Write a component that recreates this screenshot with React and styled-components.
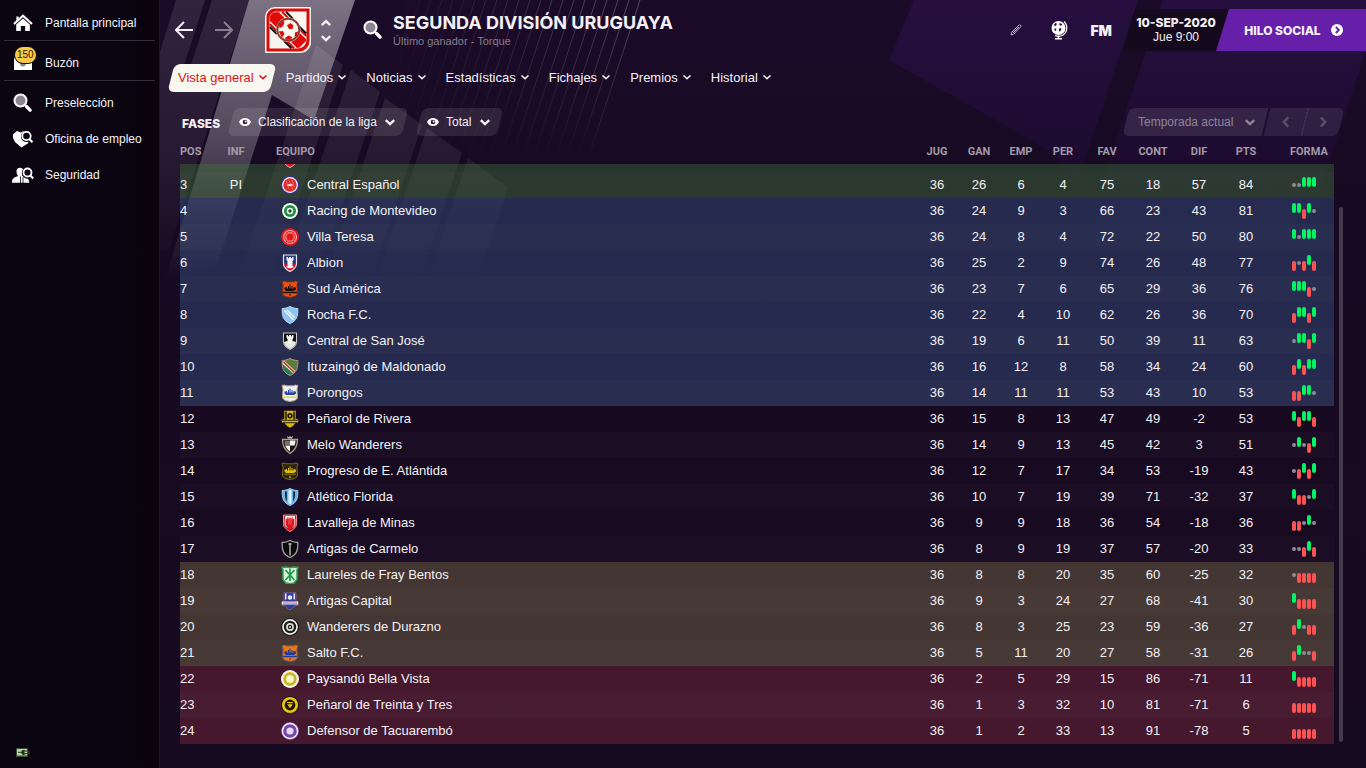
import React, { useState } from 'react';
import styled, { createGlobalStyle, css } from 'styled-components';

const GlobalStyle = createGlobalStyle`
  * {
    box-sizing: border-box;
  }
  body {
    margin: 0;
    background: #160a20;
    color: #f4f1f6;
    font-family: 'Liberation Sans', Arial, sans-serif;
    font-size: 13px;
  }
  button, select {
    font: inherit;
    color: inherit;
    border: 0;
    padding: 0;
    background: none;
    cursor: pointer;
  }
  a {
    color: inherit;
    text-decoration: none;
  }
  svg {
    display: block;
    flex-shrink: 0;
  }
`;

const navItems = ['Vista general', 'Partidos', 'Noticias', 'Estadísticas', 'Fichajes', 'Premios', 'Historial'];

// pos, team, played, won, drawn, lost, for, against, difference, points, form
const teams = [
  [3, 'Central Español', 36, 26, 6, 4, 75, 18, 57, 84, 'ddwww'],
  [4, 'Racing de Montevideo', 36, 24, 9, 3, 66, 23, 43, 81, 'wwlwd'],
  [5, 'Villa Teresa', 36, 24, 8, 4, 72, 22, 50, 80, 'wdwww'],
  [6, 'Albion', 36, 25, 2, 9, 74, 26, 48, 77, 'ldlwl'],
  [7, 'Sud América', 36, 23, 7, 6, 65, 29, 36, 76, 'wwwld'],
  [8, 'Rocha F.C.', 36, 22, 4, 10, 62, 26, 36, 70, 'lwwlw'],
  [9, 'Central de San José', 36, 19, 6, 11, 50, 39, 11, 63, 'dwwlw'],
  [10, 'Ituzaingó de Maldonado', 36, 16, 12, 8, 58, 34, 24, 60, 'lwlww'],
  [11, 'Porongos', 36, 14, 11, 11, 53, 43, 10, 53, 'llwwd'],
  [12, 'Peñarol de Rivera', 36, 15, 8, 13, 47, 49, -2, 53, 'wlwwl'],
  [13, 'Melo Wanderers', 36, 14, 9, 13, 45, 42, 3, 51, 'dwdlw'],
  [14, 'Progreso de E. Atlántida', 36, 12, 7, 17, 34, 53, -19, 43, 'dlwlw'],
  [15, 'Atlético Florida', 36, 10, 7, 19, 39, 71, -32, 37, 'wlldw'],
  [16, 'Lavalleja de Minas', 36, 9, 9, 18, 36, 54, -18, 36, 'lldwd'],
  [17, 'Artigas de Carmelo', 36, 8, 9, 19, 37, 57, -20, 33, 'ddlwl'],
  [18, 'Laureles de Fray Bentos', 36, 8, 8, 20, 35, 60, -25, 32, 'dllll'],
  [19, 'Artigas Capital', 36, 9, 3, 24, 27, 68, -41, 30, 'wllll'],
  [20, 'Wanderers de Durazno', 36, 8, 3, 25, 23, 59, -36, 27, 'lwdll'],
  [21, 'Salto F.C.', 36, 5, 11, 20, 27, 58, -31, 26, 'lwddl'],
  [22, 'Paysandú Bella Vista', 36, 2, 5, 29, 15, 86, -71, 11, 'wllll'],
  [23, 'Peñarol de Treinta y Tres', 36, 1, 3, 32, 10, 81, -71, 6, 'lllll'],
  [24, 'Defensor de Tacuarembó', 36, 1, 2, 33, 13, 91, -78, 5, 'lllll'],
];

const tones = {
  promoted: 'rgba(62, 120, 56, 0.4)',
  playoff: 'rgba(52, 76, 124, 0.5)',
  none: 'transparent',
  danger: 'rgba(87, 74, 58, 0.7)',
  relegated: 'rgba(140, 45, 65, 0.4)',
};

const toneFor = (pos) => {
  if (pos <= 3) return tones.promoted;
  if (pos <= 11) return tones.playoff;
  if (pos <= 17) return tones.none;
  if (pos <= 21) return tones.danger;
  return tones.relegated;
};

/* ---------- icons ---------- */

const Chevron = ({ size = 10, dir = 'down', weight = 2 }) => {
  const d = {
    down: 'M1.5 3.5 5 6.7 8.5 3.5',
    up: 'M1.5 6.7 5 3.5 8.5 6.7',
    left: 'M6.8 1.2 3.2 5 6.8 8.8',
    right: 'M3.2 1.2 6.8 5 3.2 8.8',
  }[dir];
  return (
    <svg width={size} height={size} viewBox="0 0 10 10" fill="none" stroke="currentColor" strokeWidth={weight}>
      <path d={d} />
    </svg>
  );
};

const Arrow = ({ flip }) => (
  <svg width="18" height="20" viewBox="0 0 18 20" fill="none" stroke="currentColor" strokeWidth="2">
    <path d={flip ? 'M0 10h16M9 2l8 8-8 8' : 'M18 10H2M9 2l-8 8 8 8'} />
  </svg>
);

const SearchIcon = () => (
  <svg width="20" height="20" viewBox="0 0 20 20">
    <circle cx="7.5" cy="7.5" r="6" fill="#8b8592" stroke="#fff" strokeWidth="2" />
    <path d="M12 12l2 2" stroke="#fff" strokeWidth="2" />
    <path d="M13.5 13.5l3.6 3.6" stroke="#fff" strokeWidth="3.4" strokeLinecap="round" />
  </svg>
);

const HomeIcon = () => (
  <svg width="20" height="18" viewBox="0 0 20 18">
    <path d="M1 10 10 1.8 19 10" fill="none" stroke="#fff" strokeWidth="2.2" />
    <path d="M3.2 10.6 10 4.6l6.8 6V17h-4.6v-5H7.8v5H3.2z" fill="#fff" />
    <path d="M3.4 2.4h2.2v3l-2.2 2z" fill="#fff" />
  </svg>
);

const InboxIcon = () => (
  <svg width="18" height="14" viewBox="0 0 18 14">
    <path d="M0 2h18v12H0z" fill="#fff" />
    <path d="M1.5 2h15l-3.4 5H4.900z" fill="#17101f" />
    <path d="M6 7a3 3.500 0 0 0 6 0z" fill="#8b8592" />
  </svg>
);

const JobIcon = () => (
  <svg width="20" height="18" viewBox="0 0 20 18">
    <path d="M0 4.200 4 1l4 1.500L10.500 1l5 12-7 4.500L2 12 0 8z" fill="#fff" />
    <circle cx="13.500" cy="6.500" r="5.500" fill="#0b0512" />
    <circle cx="13.500" cy="6" r="4.200" fill="#0b0512" stroke="#fff" strokeWidth="1.800" />
    <path d="M16.300 9l3.200 3.200" stroke="#fff" strokeWidth="2.200" />
  </svg>
);

const SecurityIcon = () => (
  <svg width="22" height="18" viewBox="0 0 22 18">
    <path d="M4.500 4.500a3.600 3.600 0 0 1 7 0c0 3-1 4-1.400 5.300L16 12.500l1.500 4.300H0C0 13 .8 12 6 10 5 8.500 4.500 7 4.500 4.500z" fill="#fff" />
    <circle cx="15.500" cy="7" r="5.700" fill="#0b0512" />
    <path d="M8.500 10.500v6.500M11 11v6" stroke="#0b0512" strokeWidth=".8" />
    <circle cx="15.500" cy="6.500" r="4" fill="none" stroke="#fff" strokeWidth="1.800" />
    <path d="M18.200 9.500l3 3" stroke="#fff" strokeWidth="2.200" />
  </svg>
);

const EyeIcon = () => (
  <svg width="12" height="10" viewBox="0 0 12 10">
    <path d="M0 5C1.500 2 3.500 1 6 1s4.500 1 6 4c-1.500 3-3.500 4-6 4S1.500 8 0 5z" fill="#fff" />
    <circle cx="6" cy="5" r="2.300" fill="#2a1c35" />
    <circle cx="6.600" cy="4.500" r="1" fill="#fff" />
  </svg>
);

const PencilIcon = () => (
  <svg width="12" height="12" viewBox="0 0 12 12" fill="none" stroke="#b5afba" strokeWidth="1">
    <path d="M1 11l.8-2.800 7.400-7.300c.8-.6 2.300.8 1.700 1.700L3.700 10.200zM3 9l6-6" />
  </svg>
);

const GlobeIcon = () => (
  <svg width="18" height="20" viewBox="0 0 18 20">
    <circle cx="8.500" cy="8" r="7" fill="#fff" />
    <path d="M4 4.500l1.500-1.500 1.500.8-.8 1.700-1.500.8zM9 3.500l2-.3 1.300 1.500-1.500 1-1.300-.7zM4 9l1.500-.8 1 1.500-1 1.500zM9.500 8l2 .5-.7 2-1 1.200-1-1.500z" fill="#29133e" />
    <path d="M14 1.500a8.600 8.600 0 0 1-1 13.500 8.400 8.400 0 0 1-8 .5" fill="none" stroke="#fff" strokeWidth="1.200" />
    <path d="M8.500 15.500v3M5 18.800h7" stroke="#fff" strokeWidth="1.500" />
  </svg>
);

const GoIcon = () => (
  <svg width="12" height="12" viewBox="0 0 12 12">
    <circle cx="6" cy="6" r="6" fill="#fff" />
    <path d="M4.800 3l3 3-3 3" fill="none" stroke="#661fa9" strokeWidth="1.800" />
  </svg>
);

const PlugIcon = () => (
  <svg width="14" height="9" viewBox="0 0 14 9">
    <path d="M0 0h12v9H0z" fill="#3c4a3a" />
    <path d="M1 1h10v6.500H1z" fill="#b4d89b" />
    <path d="M2 4.300h4M8 3h3M8 5.700h3" stroke="#20301c" strokeWidth="1" />
    <path d="M5.500 2.800 7 2h1.500v5H7L5.500 5.800z" fill="#20301c" />
    <path d="M12 3h2v3h-2z" fill="#2a2a2a" />
  </svg>
);

const LeagueCrest = () => (
  <svg width="46" height="46" viewBox="0 0 46 46">
    <path d="M10 0h35a1 1 0 0 1 1 1v34a11 11 0 0 1-11 11H1a1 1 0 0 1-1-1V10A10 10 0 0 1 10 0z" fill="#f8f6ee" />
    <path d="M10 1.500h34.500V34A10.500 10.500 0 0 1 34 44.500H1.500V10A8.500 8.500 0 0 1 10 1.500z" fill="#e00a0a" />
    <path d="M11 4.500h30.500V33a8.500 8.500 0 0 1-8.500 8.500H4.500V11A6.500 6.500 0 0 1 11 4.500z" fill="#f8f6ee" />
    <path d="M8 5.500 13.500 5 41 32v2l-6.500 6.500L32 41 5 14V9z" fill="#e00a0a" />
    <path d="M17 4.800 41.300 29M4.800 17l24.400 24.300" stroke="#e00a0a" strokeWidth="2" />
    <path d="M21 4.800l7 7.200M33 18.500l8.300 8M4.800 20l7 7M19 34l7.500 7.200" stroke="#161616" strokeWidth="2" />
    <circle cx="23.300" cy="22.800" r="12.200" fill="#f8f6ee" />
    <circle cx="23.300" cy="22.800" r="11" fill="#f8f6ee" stroke="#8d3a34" strokeWidth="2" />
    <path d="M22 18.500l3.500-2.500 3 2.500-1 3.500h-3.500zM14 17.500l4-3.800 1.500 1.500-1.500 4-3.500 2zM13.800 24.500l4.200-.5 1.500 3-2.500 3.500zM20 31l3.500-2.500 3.800 1.800-1.500 2.400h-4.500zM30 25.500l3-1-.8 4-2.500 1.500z" fill="#e00a0a" />
  </svg>
);

/* ---------- club crests ---------- */

const SHIELD = 'M2.500 1h13v8.500c0 4-3 6.300-6.500 8-3.500-1.700-6.500-4-6.500-8z';
const WIDE = 'M1 1.500 4 1l1 .8h8l1-.8 3 .5-1 3.500.5 9-2.500 2.500-5 1-5-1L1.500 14 2 5z';
const ROUND = 'M1.200 2.500C4 2.500 6.500 1.800 9 .5c2.500 1.300 5 2 7.800 2 .2 7-.5 12-7.800 15C1.700 14.500 1 9.500 1.200 2.500z';
const CASTLE = 'M5.500 3h1.500v1.200h1V3h2v1.200h1V3h1.500v3l-1 1v4.500h-5V7l-1-1z';
const SHIP = 'M3.500 9.500v-2H5V7h1v1.500h1V6h1v2.500h.5v-4h1v4h1V6h1v2.500h1V7h1v.5h1.500v2L13 11H5z';

const Rings = ({ colors }) => (
  <>
    {colors.map(([r, fill]) => (
      <circle key={r} cx="9" cy="9" r={r} fill={fill} />
    ))}
  </>
);

const crests = {
  3: (
    <>
      <Rings colors={[[9, '#3b2fb0'], [7.9, '#fff'], [6.700, '#e22b2b']]} />
      <path d="M5 5l3 8M8 4l4 10M11 4l2.500 7" stroke="#f06a62" strokeWidth=".9" />
      <path d="M6.500 8.200h5v1.800h-5z" fill="#ffe9e4" />
    </>
  ),
  4: <Rings colors={[[9, '#0d2c1a'], [8, '#f3f6ef'], [6, '#1f8a45'], [3.300, '#eaf5e6'], [1.700, '#17552d']]} />,
  5: <Rings colors={[[9, '#e5161b'], [7, '#f6b7b0'], [5.900, '#e5161b'], [4.700, '#f6b7b0'], [3.700, '#e5161b']]} />,
  6: (
    <>
      <path d={SHIELD} fill="#26367f" />
      <path d="M2.500 10l3.500-1 3 2 3-2 3.500 1c0 4-3 5.800-6.500 7.500-3.500-1.700-6.500-3.500-6.500-7.500z" fill="#cf1020" />
      <path d={CASTLE} fill="#f2f2f6" />
      <path d="M5 13l4-3 4 3-4 1.500z" fill="#fff" />
      <path d={SHIELD} fill="none" stroke="#e6e6ee" strokeWidth="1.200" />
    </>
  ),
  7: (
    <>
      <path d={WIDE} fill="#ea4f16" stroke="#7c2c12" />
      <path d={SHIP} fill="#1d0f0c" />
      <path d="M2 12.500h14" stroke="#1d0f0c" strokeWidth="1.500" />
      <path d="M8 14.500h2v1H8z" fill="#1d0f0c" />
    </>
  ),
  8: (
    <>
      <path d={ROUND} fill="#8cc5f0" stroke="#b7d9f2" />
      <path d="M3.500 4.500l9 9.500M6 4l7.500 7.500" stroke="#fff" strokeWidth="1.200" />
    </>
  ),
  9: (
    <>
      <path d={SHIELD} fill="#0c0c0e" />
      <path d="M3 10l3-1 3 2 3-2 3 1c0 3-3 5.500-6 7-3-1.500-6-4-6-7z" fill="#e9e9e0" />
      <path d={CASTLE} fill="#f5f5f0" />
      <path d={SHIELD} fill="none" stroke="#c9c8bb" strokeWidth="1.100" />
    </>
  ),
  10: (
    <>
      <path d={ROUND} fill="#2c7a4b" />
      <path d="M2 2.500 9 .8l7 1.700v7l-2 4z" fill="#5f7a3e" />
      <path d="M2 4l11.500 10.500" stroke="#f2e6de" strokeWidth="3.200" />
      <path d="M2.500 4l11 10.500" stroke="#b8392a" strokeWidth="1.700" />
      <path d={ROUND} fill="none" stroke="#b6977a" />
    </>
  ),
  11: (
    <>
      <path d={WIDE} fill="#eef0f2" stroke="#b3a878" />
      <path d={SHIP} fill="#2846a8" />
      <path d="M2.500 12.500h13v1.500h-13z" fill="#f3d120" />
    </>
  ),
  12: (
    <>
      <path d="M3 .8h12v8l2.500 1-.5 3-3 .5c-1 2-3 3.500-5 4.500-2-1-4-2.500-5-4.500l-3-.5-.5-3 2.500-1z" fill="#d8b80e" />
      <path d="M3.500 1.500H6v8H3.500zM12 1.500h2.500v8H12z" fill="#1b1607" opacity=".75" />
      <circle cx="9" cy="5.800" r="2.700" fill="#1b1607" />
      <circle cx="9" cy="5.800" r="1.100" fill="#d8b80e" />
      <path d="M.8 10.300h16.400M1.500 12.700h15" stroke="#1b1607" strokeWidth=".9" />
    </>
  ),
  13: (
    <>
      <path d="M6 0l1.500 1.300L9 .2l1.500 1.100L12 0l-.8 2.500H6.800z" fill="#c9c4b8" />
      <path d="M1.500 3.500h15c0 7-2.500 11-7.500 14-5-3-7.500-7-7.500-14z" fill="#16121a" stroke="#b0a37c" strokeWidth="1.300" />
      <path d="M9 4.500h5.500c0 2-.3 3.500-.9 5H9zM4.200 9.500H9v6c-2.300-1.700-4-3.500-4.800-6z" fill="#f3f1ea" />
      <path d="M7 5h2v4.500H4L3.500 5z" fill="#77716c" />
    </>
  ),
  14: (
    <>
      <path d={WIDE} fill="#2c2510" stroke="#7d6d17" />
      <path d={SHIP} fill="#e2bd12" />
      <path d="M3 12.300h12" stroke="#8a7716" />
      <path d="M8.200 14.200h1.700v1.500H8.200z" fill="#e2bd12" />
    </>
  ),
  15: (
    <>
      <path d={ROUND} fill="#6fb7ea" stroke="#9fd2f3" />
      <path d="M4 3.500l1.800-.3v10.500C4.300 11.500 3.800 8 4 3.500zM14 3.500l-1.800-.3v10.500C13.700 11.500 14.200 8 14 3.500z" fill="#0c2336" />
      <path d="M7.500 2.500 9 2l1.500.5V15L9 16l-1.500-1z" fill="#e4f4fd" />
    </>
  ),
  16: (
    <>
      <path d={SHIELD} fill="#d8141f" stroke="#ef8a88" />
      <path d="M4 2h10v3H4z" fill="#f6eaea" />
      <path d="M6 3.500h1.500v1h1v-1h1v1h1v-1H12v2.500l-1 1v3.500H7V7L6 6z" fill="#e73a40" />
      <path d="M4.200 5v6l2 2.500M13.800 5v6l-2 2.500" fill="none" stroke="#f6eaea" strokeWidth="1" />
    </>
  ),
  17: (
    <>
      <path d={ROUND} fill="#0b0a0d" stroke="#a5a49c" strokeWidth="1.300" />
      <path d="M9 3v12.500M7.500 4h3" stroke="#bdbbb2" strokeWidth="1.400" />
    </>
  ),
  18: (
    <>
      <path d="M1 1.500 5 1l4 .8L13 1l4 .5-1 2.500v9.500L13 17l-4 .8L5 17l-3-3.500V4z" fill="#d9f2dc" stroke="#27a654" strokeWidth="1.500" />
      <path d="M9 3v12M4.500 4l9 10M13.500 4l-9 10" stroke="#1f9a4b" strokeWidth="1.700" />
    </>
  ),
  19: (
    <>
      <path d="M3 .8h12v8.500l2 1v3h-3c-1 2-3 3.500-5 4.500-2-1-4-2.500-5-4.500H1v-3l2-1z" fill="#2d3b9a" stroke="#8f6fae" strokeWidth=".7" />
      <path d="M4 1.500h1.500v6H4zM12.500 1.500H14v6h-1.500z" fill="#e8e6f4" />
      <circle cx="9" cy="5.500" r="2.300" fill="#e8e6f4" />
      <path d="M.8 9.500h16.400v3H.8z" fill="#eceaf2" />
      <path d="M2 11h14" stroke="#c2596b" strokeWidth=".9" />
    </>
  ),
  20: <Rings colors={[[9, '#15150f'], [7.900, '#f1f1ea'], [6.200, '#1d1d1a'], [3.900, '#dcdcd2'], [2.200, '#1d1d1a'], [1, '#f1f1ea']]} />,
  21: (
    <>
      <path d={WIDE} fill="#e8780f" stroke="#6b5375" />
      <path d={SHIP} fill="#1d3b9c" />
      <path d="M2 12.500h14" stroke="#1d3b9c" strokeWidth="1.500" />
      <path d="M8 14.500h2v1H8z" fill="#1d3b9c" />
    </>
  ),
  22: <Rings colors={[[9, '#f7f7ee'], [6.900, '#e2c51e'], [5.500, '#7f8f6a'], [4.800, '#ecd94c'], [3.600, '#fdf7c8']]} />,
  23: (
    <>
      <Rings colors={[[9, '#1a1605'], [8, '#ecc80c'], [5.400, '#1a1605']]} />
      <path d="M6.200 6h5.600v1.200H6.200zM6.200 8.300h5.600L9 12.200z" fill="#ecc80c" />
    </>
  ),
  24: <Rings colors={[[9, '#7a4fae'], [8.300, '#f4f0f8'], [6.800, '#7447ab'], [3.600, '#e3daee']]} />,
};

const Crest = ({ pos }) => (
  <svg width="18" height="18" viewBox="0 0 18 18">{crests[pos]}</svg>
);

const marks = {
  w: { y: 0, height: 10, fill: '#00f562' },
  l: { y: 6, height: 10, fill: '#fb5353' },
  d: { y: 6, height: 4, fill: '#908a94' },
};

const Form = ({ results }) => (
  <svg width="24" height="16" viewBox="0 0 24 16">
    {results.split('').map((r, i) => (
      <rect key={i} x={i * 5} width="4" rx="2" {...marks[r]} />
    ))}
  </svg>
);

const bandTops = [[316, 45, 343, 65], [351, 70, 380, 92], [385, 98, 422, 125], [427, 128, 462, 153], [468, 158, 508, 187]];

const Backdrop = () => (
  <BackdropSvg viewBox="160 0 1206 768" preserveAspectRatio="xMidYMin slice" aria-hidden="true">
    <defs>
      <linearGradient id="base" x1="0" y1="0" x2="0" y2="1">
        <stop offset="0" stopColor="#1b0b29" />
        <stop offset=".3" stopColor="#170921" />
        <stop offset="1" stopColor="#160a20" />
      </linearGradient>
      <linearGradient id="fade" gradientUnits="userSpaceOnUse" x1="0" y1="0" x2="0" y2="280">
        <stop offset="0" stopColor="#fff" stopOpacity=".42" />
        <stop offset=".5" stopColor="#fff" stopOpacity=".25" />
        <stop offset="1" stopColor="#fff" stopOpacity="0" />
      </linearGradient>
      <linearGradient id="soft" gradientUnits="userSpaceOnUse" x1="0" y1="0" x2="0" y2="280">
        <stop offset="0" stopColor="#fff" stopOpacity=".1" />
        <stop offset=".6" stopColor="#fff" stopOpacity=".06" />
        <stop offset="1" stopColor="#fff" stopOpacity="0" />
      </linearGradient>
      <linearGradient id="line" gradientUnits="userSpaceOnUse" x1="0" y1="0" x2="0" y2="165">
        <stop offset="0" stopColor="#fff" stopOpacity=".26" />
        <stop offset="1" stopColor="#fff" stopOpacity="0" />
      </linearGradient>
      <linearGradient id="violet" gradientUnits="userSpaceOnUse" x1="0" y1="0" x2="0" y2="250">
        <stop offset="0" stopColor="#260f40" />
        <stop offset=".6" stopColor="#1e0b30" />
        <stop offset="1" stopColor="#180a24" stopOpacity="0" />
      </linearGradient>
    </defs>
    <path d="M160 0h1206v768H160z" fill="url(#base)" />
    <path d="M176 0h29l-45 140V52zM212 0h37l-80 250h-9v-90zM160 75l28 20-28 85z" fill="url(#soft)" />
    <path d="M249 0h106l-41 120-42-25-55 170-52 15z" fill="url(#fade)" />
    {bandTops.map(([x1, y1, x2, y2]) => (
      <path key={x1} d={`M${x1} ${y1}L${x2} ${y2}L${x2 - (280 - y2) / 3} 280H${x1 - (280 - y1) / 3}Z`} fill="url(#soft)" />
    ))}
    {Array.from({ length: 22 }).map((_, i) => (
      <path key={i} d={`M${640 - i * 11} 0l-54 165`} stroke="url(#line)" opacity={1 - i / 23} />
    ))}
    <path d="M914 0h224l-60 180-38-35-151-85z" fill="url(#violet)" />
    <path d="M1163 0h203v50l-66 200h-220z" fill="url(#violet)" />
  </BackdropSvg>
);

const App = () => {
  const [active, setActive] = useState('Vista general');

  return (
    <>
      <GlobalStyle />
      <Page>
        <Sidebar>
          <SideGroup>
            <SideLink href="#inicio"><SideIcon><HomeIcon /></SideIcon>Pantalla principal</SideLink>
          </SideGroup>
          <SideGroup>
            <SideLink href="#buzon">
              <SideIcon><InboxIcon /><Badge>150</Badge></SideIcon>Buzón
            </SideLink>
          </SideGroup>
          <SideGroup>
            <SideLink href="#preseleccion"><SideIcon><SearchIcon /></SideIcon>Preselección</SideLink>
            <SideLink href="#empleo"><SideIcon><JobIcon /></SideIcon>Oficina de empleo</SideLink>
            <SideLink href="#seguridad"><SideIcon><SecurityIcon /></SideIcon>Seguridad</SideLink>
          </SideGroup>
          <Power><PlugIcon /></Power>
        </Sidebar>

        <Main>
          <Backdrop />
          <Header>
            <History>
              <IconButton aria-label="Atrás"><Arrow /></IconButton>
              <IconButton aria-label="Adelante" $dim><Arrow flip /></IconButton>
            </History>
            <LeagueCrest />
            <Stepper>
              <IconButton aria-label="Anterior"><Chevron dir="up" size={12} /></IconButton>
              <IconButton aria-label="Siguiente"><Chevron size={12} /></IconButton>
            </Stepper>
            <IconButton aria-label="Buscar"><SearchIcon /></IconButton>
            <Heading>
              <Title>SEGUNDA DIVISIÓN URUGUAYA</Title>
              <Subtitle>Último ganador - Torque</Subtitle>
            </Heading>
            <Tools>
              <IconButton aria-label="Editar"><PencilIcon /></IconButton>
              <IconButton aria-label="Mundo"><GlobeIcon /></IconButton>
              <Brand>FM</Brand>
            </Tools>
            <DateBox>
              <DateText>10-SEP-2020</DateText>
              <TimeText>Jue 9:00</TimeText>
            </DateBox>
            <Continue>HILO SOCIAL <GoIcon /></Continue>
          </Header>

          <Tabs>
            {navItems.map((item) => (
              <Tab
                key={item}
                href={`#${item}`}
                $active={item === active}
                onClick={() => setActive(item)}>
                {item}
                <Chevron weight={1.6} />
              </Tab>
            ))}
          </Tabs>

          <Filters>
            <FilterTitle>FASES</FilterTitle>
            <Picker>
              <EyeIcon />
              <Select aria-label="Fase"><option>Clasificación de la liga</option></Select>
              <Chevron size={12} />
            </Picker>
            <Picker>
              <EyeIcon />
              <Select aria-label="Partidos"><option>Total</option></Select>
              <Chevron size={12} />
            </Picker>
            <Season>
              <Picker $muted>
                <Select aria-label="Temporada"><option>Temporada actual</option></Select>
                <Chevron size={12} />
              </Picker>
              <Pager>
                <PagerButton aria-label="Temporada anterior"><Chevron dir="left" size={12} /></PagerButton>
                <PagerButton aria-label="Temporada siguiente"><Chevron dir="right" size={12} /></PagerButton>
              </Pager>
            </Season>
          </Filters>

          <TableArea>
            <Table>
              <colgroup>
                <Col $w={44} />
                <Col $w={24} />
                <Col />
                <Col $w={42} />
                <Col $w={42} />
                <Col $w={42} />
                <Col $w={42} />
                <Col $w={46} />
                <Col $w={46} />
                <Col $w={46} />
                <Col $w={48} />
                <Col $w={64} />
              </colgroup>
              <thead>
                <tr>
                  <Th $left>POS</Th>
                  <Th>INF</Th>
                  <Th $left $pad={28}>EQUIPO</Th>
                  <Th>JUG</Th>
                  <Th>GAN</Th>
                  <Th>EMP</Th>
                  <Th>PER</Th>
                  <Th>FAV</Th>
                  <Th>CONT</Th>
                  <Th>DIF</Th>
                  <Th>PTS</Th>
                  <Th $left $pad={20}>FORMA</Th>
                </tr>
              </thead>
              <tbody>
                <PeekRow>
                  <td colSpan={12}>
                    <Peek>
                      <svg width="18" height="4" viewBox="0 14 18 4">
                        <path d={SHIELD} fill="#e0101c" stroke="#e9c9c9" />
                      </svg>
                    </Peek>
                  </td>
                </PeekRow>
                {teams.map(([pos, name, ...rest]) => {
                  const form = rest.pop();
                  return (
                    <Row key={pos} $tone={toneFor(pos)}>
                      <Td $left>{pos}</Td>
                      <Td>{pos === 3 ? 'PI' : ''}</Td>
                      <MediaTd $pad={33}>
                        <Team><Crest pos={pos} /><TeamName>{name}</TeamName></Team>
                      </MediaTd>
                      {rest.map((value, i) => <Td key={i}>{value}</Td>)}
                      <MediaTd $pad={22}><Form results={form} /></MediaTd>
                    </Row>
                  );
                })}
              </tbody>
            </Table>
            <ScrollThumb />
          </TableArea>
        </Main>
      </Page>
    </>
  );
};

/* ---------- styles ---------- */

const Page = styled.div`
  display: flex;
  min-height: 100vh;
`;

const Sidebar = styled.nav`
  display: flex;
  flex-direction: column;
  width: 160px;
  flex-shrink: 0;
  padding-top: 1px;
  background: linear-gradient(90deg, #0b0512 70%, #0a030d);
  border-right: 1px solid #1e1430;
`;

const SideGroup = styled.div`
  margin: 0 4px;
  padding-top: 3px;

  & + & {
    border-top: 1px solid #332d3b;
  }
`;

const SideLink = styled.a`
  display: flex;
  align-items: center;
  height: 36px;
  padding: 2px 0 0 8px;
  gap: 11px;
  font-size: 12px;
`;

const SideIcon = styled.span`
  position: relative;
  display: flex;
  justify-content: center;
  width: 22px;
`;

const Badge = styled.span`
  position: absolute;
  top: -10px;
  left: 2px;
  height: 18px;
  padding: 0 2px;
  border: 1px solid #0b0512;
  border-radius: 9px;
  background: #fbcb45;
  color: #1c1405;
  font-size: 10px;
  line-height: 16px;
`;

const Power = styled.div`
  margin: auto 0 11px 16px;
`;

const Main = styled.main`
  position: relative;
  flex: 1;
  min-width: 0;
  overflow: hidden;
`;

const BackdropSvg = styled.svg`
  position: absolute;
  inset: 0;
  width: 100%;
  height: 100%;
  z-index: -1;
`;

const Header = styled.header`
  display: flex;
  align-items: center;
  height: 60px;
  padding-left: 15px;
`;

const History = styled.div`
  display: flex;
  gap: 22px;
  margin-right: 32px;
`;

const IconButton = styled.button`
  display: block;
  ${(props) => props.$dim && 'opacity: 0.45;'}
`;

const Stepper = styled.div`
  display: flex;
  flex-direction: column;
  gap: 3px;
  margin: 0 31px 0 9px;
`;

const Heading = styled.div`
  margin-left: 10px;
`;

const heavy = css`
  font-family: Inter, 'Liberation Sans', sans-serif;
  font-weight: 800;
`;

const Title = styled.h1`
  ${heavy}
  margin: 0;
  font-size: 18px;
  font-weight: 700;
  line-height: 22px;
`;

const Subtitle = styled.p`
  margin: 0;
  color: #857d8c;
  font-size: 11px;
  line-height: 15px;
`;

const Tools = styled.div`
  display: flex;
  align-items: center;
  gap: 28px;
  margin-left: auto;
  margin-right: 11px;
`;

const Brand = styled.span`
  ${heavy}
  margin-left: -6px;
  font-size: 14px;
  font-weight: 900;
`;

const DateBox = styled.div`
  width: 106px;
  height: 42px;
  padding-top: 6px;
  background: #150a1d;
  clip-path: polygon(12px 0, 100% 0, 100% 100%, 0 100%);
  text-align: center;
`;

const DateText = styled.div`
  ${heavy}
  font-size: 12px;
  line-height: 16px;
`;

const TimeText = styled.div`
  font-size: 12px;
  line-height: 13px;
`;

const Continue = styled.button`
  ${heavy}
  display: flex;
  align-items: center;
  justify-content: center;
  gap: 10px;
  width: 150px;
  height: 42px;
  margin-left: -13px;
  padding-left: 5px;
  background: #661fa9;
  clip-path: polygon(13px 0, 100% 0, 100% 100%, 0 100%);
  font-size: 12px;
`;

const Tabs = styled.nav`
  display: flex;
  padding: 4px 0 0 8px;
`;

const Tab = styled.a`
  position: relative;
  display: flex;
  align-items: center;
  gap: 4px;
  height: 28px;
  padding: 0 8px 2px 10px;
  color: ${(props) => (props.$active ? '#df1414' : '#f4f1f6')};

  &::before {
    content: '';
    position: absolute;
    inset: 0 3px;
    z-index: -1;
    border-radius: 6px;
    background: ${(props) => (props.$active ? '#f9f8f0' : 'transparent')};
    transform: skewX(-14deg);
  }

  & + & {
    padding-right: 9px;
  }
`;

const Filters = styled.div`
  display: flex;
  align-items: center;
  gap: 14px;
  padding: 16px 25px 0 22px;
`;

const FilterTitle = styled.h2`
  ${heavy}
  margin: 2px -3px 0 0;
  font-size: 12px;
`;

const slab = css`
  position: relative;

  &::before {
    content: '';
    position: absolute;
    inset: 0;
    z-index: -1;
    border-radius: 6px;
    background: rgba(255, 255, 255, 0.1);
    transform: skewX(-14deg);
  }
`;

const Picker = styled.label`
  ${slab}
  display: flex;
  align-items: center;
  gap: 7px;
  height: 28px;
  padding: 0 9px 0 8px;
  font-size: 12px;

  ${(props) => props.$muted && css`
    color: #8f8598;
    gap: 10px;
    padding-left: 12px;

    &::before {
      border-radius: 6px 0 0 6px;
    }
  `}
`;

const Select = styled.select`
  appearance: none;
  outline: none;
`;

const Season = styled.div`
  display: flex;
  gap: 2px;
  margin-left: auto;
`;

const Pager = styled.div`
  ${slab}
  display: flex;

  &::before {
    border-radius: 0 6px 6px 0;
    background: linear-gradient(90deg, rgba(255, 255, 255, 0.08) 50%, rgba(255, 255, 255, 0.14) 50%, rgba(255, 255, 255, 0.14) 52%, rgba(255, 255, 255, 0.08) 52%);
  }
`;

const PagerButton = styled.button`
  display: flex;
  align-items: center;
  justify-content: center;
  width: 37px;
  height: 28px;
  color: #5d5068;
`;

const TableArea = styled.div`
  display: flex;
  gap: 5px;
  padding: 4px 23px 0 20px;
`;

const Table = styled.table`
  flex: 1;
  table-layout: fixed;
  border-collapse: collapse;
  border-spacing: 0;
`;

const Col = styled.col`
  ${(props) => props.$w && `width: ${props.$w}px;`}
`;

const Th = styled.th`
  height: 24px;
  padding: 0 0 1px ${(props) => props.$pad || 0}px;
  text-align: ${(props) => (props.$left ? 'left' : 'center')};
  color: #a39aa8;
  font-family: Roboto, 'Liberation Sans', sans-serif;
  font-size: 11px;
  font-weight: 700;
`;

const PeekRow = styled.tr`
  height: 8px;
  background: ${tones.promoted};

  td {
    padding: 0;
  }
`;

const Peek = styled.div`
  height: 8px;
  padding-left: 101px;
`;

const Row = styled.tr`
  background: ${(props) => props.$tone};

  &:nth-child(even) td {
    background: rgba(255, 255, 255, 0.02);
  }
`;

const Td = styled.td`
  height: 26px;
  padding: 0 0 2px;
  text-align: ${(props) => (props.$left ? 'left' : 'center')};
`;

const MediaTd = styled.td`
  height: 26px;
  padding: 0 0 0 ${(props) => props.$pad}px;
`;

const Team = styled.div`
  display: flex;
  align-items: center;
  gap: 8px;
`;

const TeamName = styled.span`
  padding-bottom: 2px;
`;

const ScrollThumb = styled.div`
  width: 4px;
  margin: 67px 0 2px;
  border-radius: 2px;
  background: #433a4c;
`;

export default App;
